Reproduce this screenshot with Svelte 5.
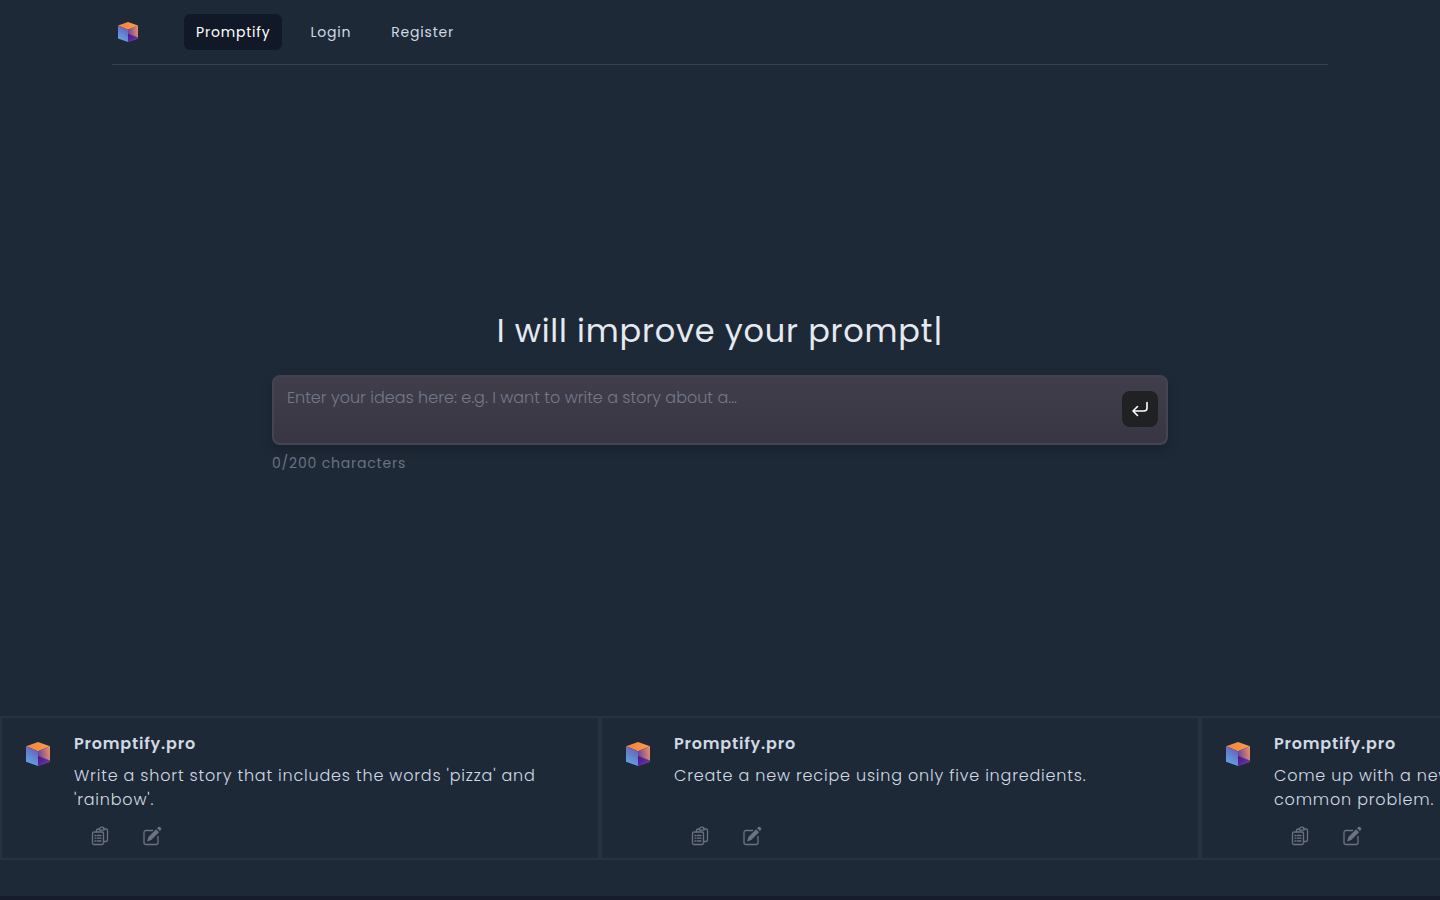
<script lang="ts">
  const links = ['Promptify', 'Login', 'Register'];
  const maxLength = 200;

  const prompts = [
    "Write a short story that includes the words 'pizza' and 'rainbow'.",
    'Create a new recipe using only five ingredients.',
    'Come up with a new invention that would help to solve a common problem.',
  ];

  let current = $state('Promptify');
  let idea = $state('');

  function copyPrompt(text: string) {
    navigator.clipboard?.writeText(text);
  }
</script>

<svelte:head>
  <title>Promptify</title>
</svelte:head>

{#snippet cube()}
  <svg class="cube" viewBox="0 0 24 24" aria-hidden="true">
    <defs>
      <linearGradient id="cube-top" x1="0" y1="0" x2="1" y2="0">
        <stop offset="0" stop-color="#f0803f" />
        <stop offset="1" stop-color="#ff9c4a" />
      </linearGradient>
      <linearGradient id="cube-left" x1="0.7" y1="0" x2="0.3" y2="1">
        <stop offset="0" stop-color="#6a5bb8" />
        <stop offset="1" stop-color="#5fa8e8" />
      </linearGradient>
      <linearGradient id="cube-right" x1="0" y1="0.5" x2="1" y2="0.3">
        <stop offset="0" stop-color="#6b429f" />
        <stop offset="1" stop-color="#e58d69" />
      </linearGradient>
      <linearGradient id="cube-base" x1="0" y1="0" x2="1" y2="1">
        <stop offset="0" stop-color="#44148c" />
        <stop offset="1" stop-color="#6c3fae" />
      </linearGradient>
    </defs>
    <path d="M12 0 24 4.2 12 9.2 0 4.2Z" fill="url(#cube-top)" />
    <path d="M0 4.2 12 9.2V24L0 19.8Z" fill="url(#cube-left)" />
    <path d="M12 9.2 24 4.2V19.8L12 24Z" fill="url(#cube-right)" />
    <path d="M12 14 24 18.6V19.8L12 24Z" fill="url(#cube-base)" />
  </svg>
{/snippet}

<div class="page">
  <header>
    <a class="brand" href="#home" aria-label="Home">{@render cube()}</a>
    <nav>
      {#each links as link}
        <a
          href="#{link.toLowerCase()}"
          class:active={current === link}
          onclick={() => (current = link)}>{link}</a>
      {/each}
    </nav>
  </header>

  <main>
    <h1>I will improve your prompt<span>|</span></h1>
    <form onsubmit={(e) => e.preventDefault()}>
      <div class="idea-box">
        <textarea
          aria-label="Your idea"
          maxlength={maxLength}
          placeholder="Enter your ideas here: e.g. I want to write a story about a..."
          bind:value={idea}></textarea>
        <button class="send" aria-label="Send">
          <svg viewBox="0 0 20 20" aria-hidden="true">
            <path d="M17 3.5V9a3 3 0 0 1-3 3H3.5M7.5 7.5 3 12l4.5 4.5" />
          </svg>
        </button>
      </div>
      <p class="count">{idea.length}/{maxLength} characters</p>
    </form>
  </main>

  <section class="prompts">
    {#each prompts as prompt}
      <article>
        {@render cube()}
        <div class="body">
          <h2>Promptify.pro</h2>
          <p>{prompt}</p>
          <div class="actions">
            <button aria-label="Copy prompt" onclick={() => copyPrompt(prompt)}>
              <svg viewBox="0 0 20 20" aria-hidden="true">
                <rect x="2.5" y="6" width="11" height="12.5" rx="1.5" />
                <path d="M6.5 6V4.5A1.5 1.5 0 0 1 8 3h1.5m4.5 0h2a1.5 1.5 0 0 1 1.500 1.500v9.500a1.500 1.500 0 0 1-1.500 1.500h-2" />
                <path d="M9.500 4.200V3C9.500 2 10.500 1.200 11.700 1.200S14 2 14 3v1.200Z" />
                <path d="M5 9.500h1M7.500 9.500H11M5 12.200h1M7.500 12.200H11M5 15h1M7.500 15H11" />
              </svg>
            </button>
            <button aria-label="Edit prompt" onclick={() => (idea = prompt)}>
              <svg viewBox="0 0 20 20" aria-hidden="true">
                <path d="M10.500 4.500H4a2 2 0 0 0-2 2v10a2 2 0 0 0 2 2h10a2 2 0 0 0 2-2V10.500" />
                <path class="solid" d="M14 3.200 17 6.200 9.200 13.900 5 15.400 6.400 11ZM15 2.200l.8-.8a1.900 1.900 0 0 1 2.800 0 1.900 1.900 0 0 1 0 2.800l-.8.8Z" />
              </svg>
            </button>
          </div>
        </div>
      </article>
    {/each}
  </section>
  <footer></footer>
</div>

<style>
  :global(body) {
    margin: 0;
    background: #1e2937;
  }

  .page {
    display: flex;
    flex-direction: column;
    min-height: 100vh;
    overflow: hidden;
    background: #1e2937;
    color: #d1d9e4;
    font-family: Poppins, Inter, sans-serif;
    letter-spacing: 0.05em;
  }

  h1,
  h2,
  p {
    margin: 0;
  }

  button {
    border: none;
    cursor: pointer;
  }

  header {
    display: flex;
    align-items: center;
    gap: 46px;
    box-sizing: border-box;
    width: calc(100% - 64px);
    max-width: 1216px;
    height: 65px;
    margin: 0 auto;
    padding-left: 6px;
    border-bottom: 1px solid #374151;
  }

  .brand {
    display: flex;
    width: 20px;
  }

  .cube {
    display: block;
    width: 100%;
  }

  nav {
    display: flex;
    gap: 16px;
  }

  nav a {
    padding: 8px 12px;
    border-radius: 6px;
    color: #d1d9e4;
    font-size: 14px;
    font-weight: 400;
    line-height: 20px;
    text-decoration: none;
  }

  nav a.active {
    background: #111827;
    color: #fff;
  }

  main {
    display: flex;
    flex: 1;
    flex-direction: column;
    align-items: center;
    justify-content: center;
    padding: 2px 32px 0;
  }

  h1 {
    margin-bottom: 24px;
    color: #e5e9f1;
    font-size: 32px;
    font-weight: 400;
    line-height: 40px;
    letter-spacing: 0.025em;
    text-align: center;
  }

  form {
    width: 100%;
    max-width: 896px;
  }

  .idea-box {
    display: flex;
    align-items: flex-start;
    gap: 12px;
    box-sizing: border-box;
    height: 70px;
    padding: 8px 8px 8px 13px;
    border: 2px solid #434552;
    border-top-color: #41424f;
    border-radius: 8px;
    background: linear-gradient(#403e4b, #393643);
    box-shadow: 0 4px 12px rgba(0, 0, 0, 0.2);
  }

  textarea {
    flex: 1;
    height: 48px;
    padding: 1px 0 0;
    border: none;
    outline: none;
    resize: none;
    background: transparent;
    color: #e5e7eb;
    font: 300 16px/24px Poppins, Inter, sans-serif;
  }

  textarea::placeholder {
    color: #747989;
  }

  .send {
    display: grid;
    place-items: center;
    width: 36px;
    height: 36px;
    margin-top: 6px;
    padding: 0;
    border-radius: 8px;
    background: #202123;
  }

  .send svg {
    width: 20px;
    fill: none;
    stroke: #fff;
    stroke-width: 1.6;
    stroke-linecap: round;
    stroke-linejoin: round;
  }

  .count {
    margin-top: 8px;
    color: #6b7280;
    font-size: 14px;
    line-height: 20px;
  }

  .prompts {
    display: flex;
    margin-bottom: 36px;
  }

  article {
    display: flex;
    flex: none;
    gap: 24px;
    box-sizing: border-box;
    width: 600px;
    padding: 14px 24px 12px;
    border: 2px solid #27313f;
  }

  article .cube {
    flex: none;
    width: 24px;
    height: 24px;
    margin-top: 10px;
  }

  .body {
    display: flex;
    flex: 1;
    flex-direction: column;
  }

  h2 {
    margin-bottom: 8px;
    font-size: 16px;
    font-weight: 600;
    line-height: 24px;
  }

  .body p {
    min-height: 48px;
    font-size: 16px;
    font-weight: 300;
    line-height: 24px;
  }

  .actions {
    display: flex;
    gap: 32px;
    margin-top: 14px;
    padding-left: 16px;
  }

  .actions button {
    width: 20px;
    height: 20px;
    padding: 0;
    background: transparent;
  }

  .actions svg {
    display: block;
    width: 20px;
    fill: none;
    stroke: #6b7280;
    stroke-width: 1.3;
    stroke-linecap: round;
    stroke-linejoin: round;
  }

  .actions .solid {
    fill: #6b7280;
    stroke: none;
  }

  footer {
    height: 4px;
    background: #161c2c;
  }
</style>
